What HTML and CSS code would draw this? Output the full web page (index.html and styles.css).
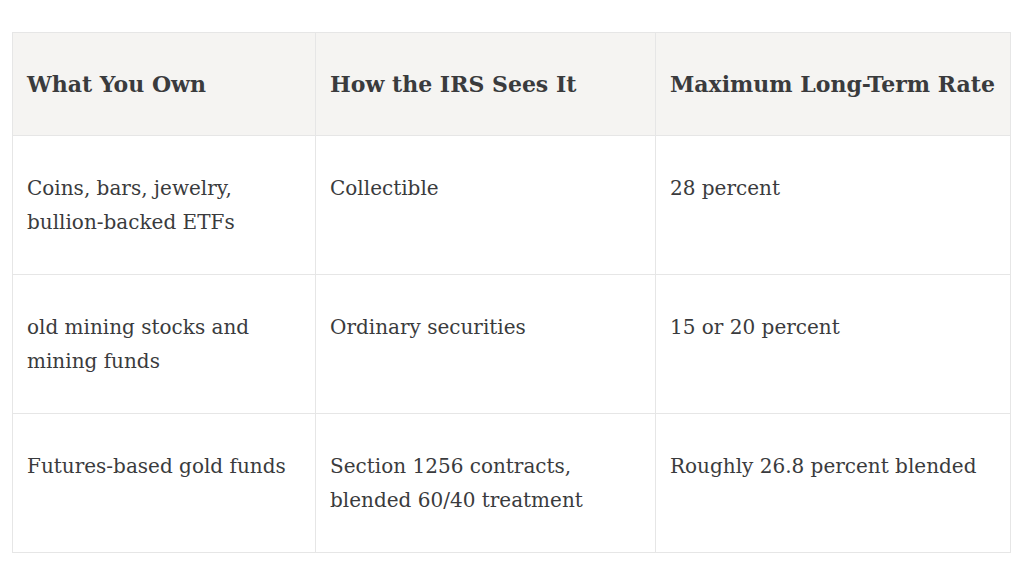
FILE: index.html
```html
<!DOCTYPE html>
<html>
<head>
<meta charset="utf-8">
<link rel="stylesheet" href="styles.css">
</head>
<body>
<div class="page">
<table class="tax">
<colgroup><col class="c1"><col class="c2"><col class="c3"></colgroup>
<thead>
<tr><th>What You Own</th><th>How the IRS Sees It</th><th>Maximum Long-Term Rate</th></tr>
</thead>
<tbody>
<tr><td>Coins, bars, jewelry, <span class="nw">bullion-backed</span> ETFs</td><td>Collectible</td><td>28 percent</td></tr>
<tr><td>old mining stocks and mining funds</td><td>Ordinary securities</td><td>15 or 20 percent</td></tr>
<tr><td>Futures-based gold funds</td><td>Section 1256 contracts, blended 60/40 treatment</td><td>Roughly 26.8 percent blended</td></tr>
</tbody>
</table>
</div>
</body>
</html>
```
FILE: styles.css
```css
html, body { margin: 0; padding: 0; background: #ffffff; }
.page { padding: 32px 14px 0 12px; }
.tax {
  width: 998px;
  border-collapse: collapse;
  table-layout: fixed;
  font-family: "DejaVu Serif", "Liberation Serif", serif;
  font-size: 20px;
  line-height: 34px;
  color: #3a3b3d;
}
.c1 { width: 303px; }
.c2 { width: 340px; }
.c3 { width: 355px; }
.tax th, .tax td {
  border: 1px solid #e6e6e6;
  text-align: left;
  vertical-align: top;
  padding: 35px 14px 35px 14px;
}
.tax th {
  background: #f5f4f2;
  font-weight: bold;
  font-size: 22px;
  padding: 34px 10px 34px 14px;
  white-space: nowrap;
}
.nw { white-space: nowrap; }
```
